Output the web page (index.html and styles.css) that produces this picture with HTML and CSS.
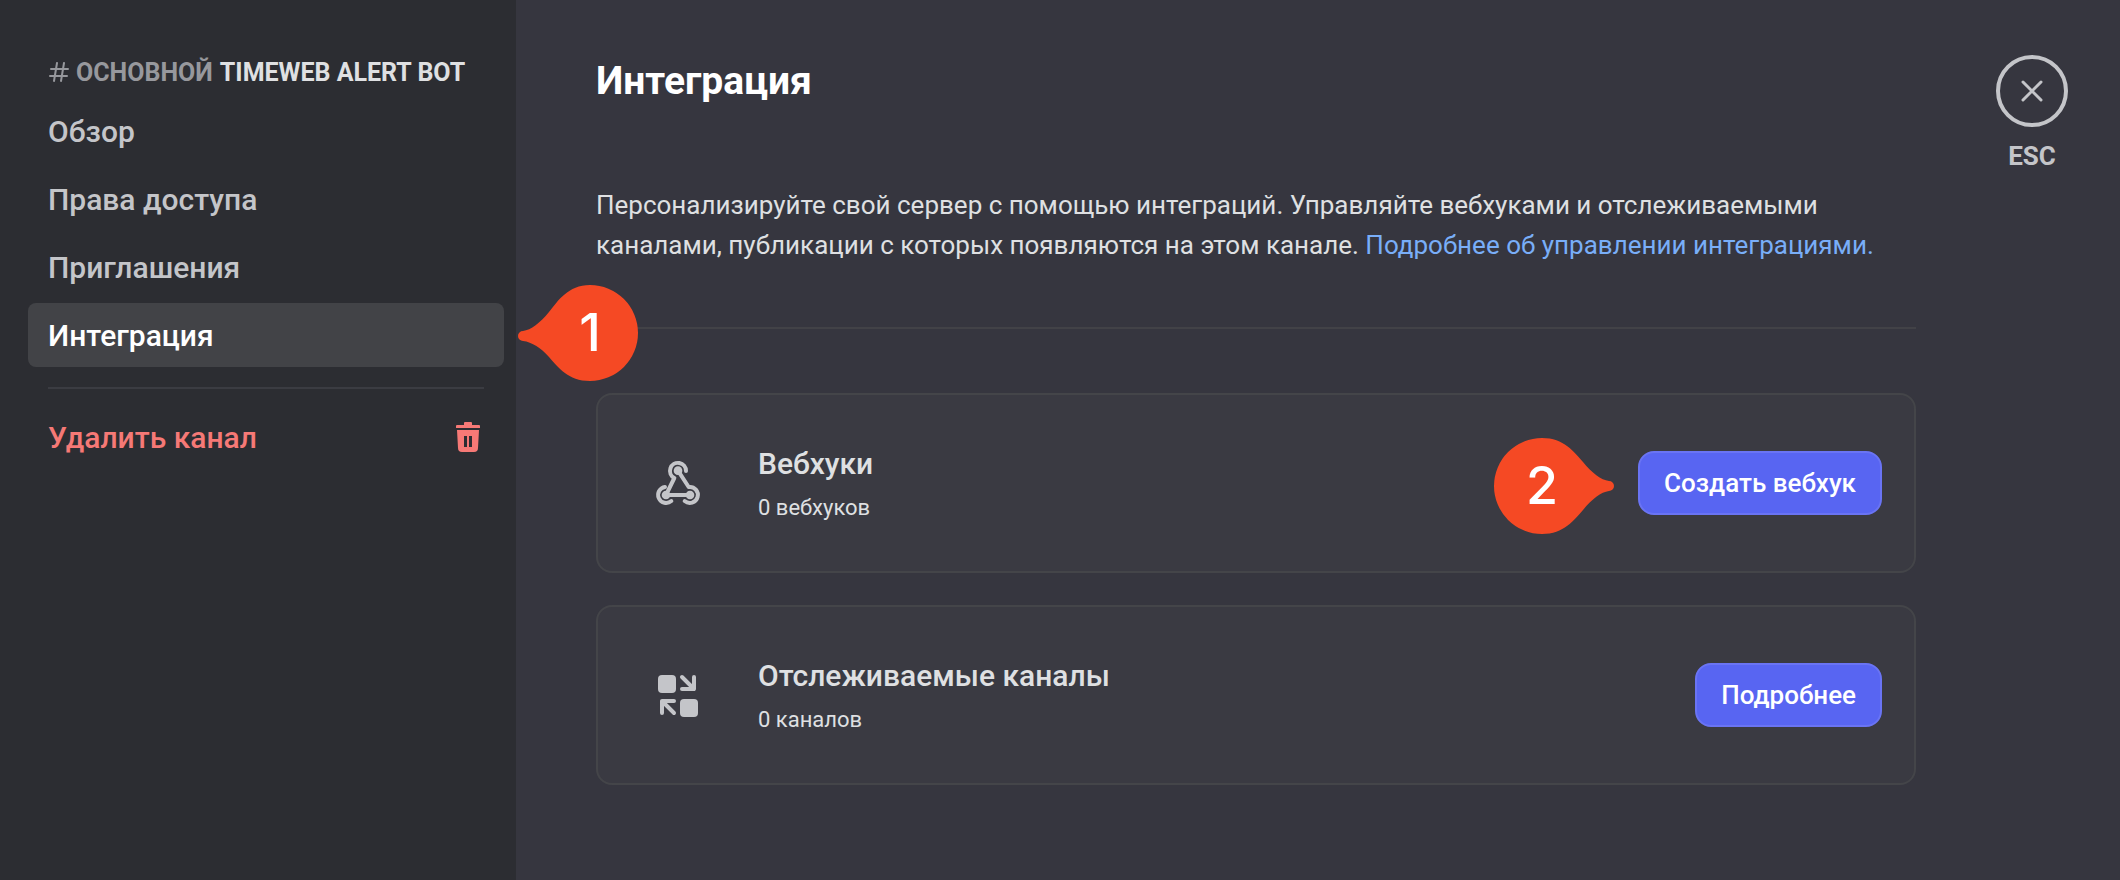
FILE: index.html
```html
<!DOCTYPE html>
<html lang="ru">
<head>
    <meta charset="UTF-8">
    <title>Интеграция</title>
    <link rel="stylesheet" href="styles.css">
</head>
<body>
<div class="settings">
    <aside class="sidebar">
        <h2 class="sidebar-title">
            <svg class="hash-icon" viewBox="0 0 20 20"><path d="M8 1 5 19M15 1l-3 18M2 7h17M1 14h17"/></svg>
            <span class="muted">ОСНОВНОЙ</span>
            <span>TIMEWEB ALERT BOT</span>
        </h2>
        <nav class="menu">
            <a class="menu-item" href="#overview">Обзор</a>
            <a class="menu-item" href="#permissions">Права доступа</a>
            <a class="menu-item" href="#invites">Приглашения</a>
            <a class="menu-item active" href="#integrations">Интеграция
                <span class="marker marker-left">
                    <svg viewBox="0 0 120 96"><path d="M72 0C50 0 40 16 31 27 22 38 13 45 5 46A5 5 0 0 0 5 56C14 57 23 63 31 72 40 82 50 96 72 96A48 48 0 0 0 72 0Z"/></svg>
                    <b>1</b>
                </span>
            </a>
        </nav>
        <hr class="sidebar-line">
        <button type="button" class="menu-item delete">
            Удалить канал
            <svg class="trash-icon" viewBox="0 0 24 30">
                <path d="M8 3V1a1 1 0 0 1 1-1h6a1 1 0 0 1 1 1v2h7a1 1 0 0 1 1 1v2H0V4a1 1 0 0 1 1-1z"/>
                <path fill-rule="evenodd" d="M1 8h22l-1 18a4 4 0 0 1-4 4H6a4 4 0 0 1-4-4zM8 14v11h3V14zM13 14v11h3V14z"/>
            </svg>
        </button>
    </aside>
    <main class="main">
        <div class="content">
            <h1>Интеграция</h1>
            <p class="description">Персонализируйте свой сервер с помощью интеграций. Управляйте вебхуками и отслеживаемыми каналами, публикации с которых появляются на этом канале. <a href="#help">Подробнее об управлении интеграциями.</a></p>
            <hr class="content-line">
            <section class="card">
                <svg class="card-icon" viewBox="0 0 144 144">
                    <g fill="none" stroke="currentColor" stroke-width="12" stroke-linecap="round" stroke-linejoin="round">
                        <path d="M96 36A24 24 0 1 0 61 57L36 108"/>
                        <path d="M72 35 104 84A24 24 0 1 1 92 126"/>
                        <path d="M33 84A24 24 0 1 0 52 126"/>
                        <path d="M36 108H108"/>
                    </g>
                    <circle cx="72" cy="35" r="13"/>
                    <circle cx="36" cy="108" r="13"/>
                    <circle cx="108" cy="108" r="13"/>
                </svg>
                <div class="card-text">
                    <h3>Вебхуки</h3>
                    <p>0 вебхуков</p>
                </div>
                <div class="card-action">
                    <span class="marker marker-right">
                        <svg viewBox="0 0 120 96"><path d="M48 0C70 0 80 14 89 24 98 35 107 42 115 43A5 5 0 0 1 115 53C107 54 98 61 89 72 80 82 70 96 48 96A48 48 0 0 1 48 0Z"/></svg>
                        <b>2</b>
                    </span>
                    <button type="button" class="btn">Создать вебхук</button>
                </div>
            </section>
            <section class="card">
                <svg class="card-icon" viewBox="0 0 48 48">
                    <rect x="4" y="4" width="18" height="18" rx="4"/>
                    <rect x="26" y="28" width="18" height="18" rx="4"/>
                    <path class="arrow" d="M28 6 40 18M40 6v12H28M20 42 8 30M20 30H8v12"/>
                </svg>
                <div class="card-text">
                    <h3>Отслеживаемые каналы</h3>
                    <p>0 каналов</p>
                </div>
                <div class="card-action">
                    <button type="button" class="btn">Подробнее</button>
                </div>
            </section>
        </div>
        <div class="close">
            <button type="button" class="close-btn" id="close" aria-label="Закрыть">
                <svg viewBox="0 0 24 24"><path d="M3 3 21 21M21 3 3 21"/></svg>
            </button>
            <label for="close">ESC</label>
        </div>
    </main>
</div>
</body>
</html>
```

FILE: styles.css
```css
* {
    box-sizing: border-box;
}
body {
    margin: 0;
    background-color: #36363f;
    color: #dfe0e2;
    font-family: Roboto, "Noto Sans", sans-serif;
}
h1, h2, h3, p {
    margin: 0;
}
button {
    font-family: inherit;
    cursor: pointer;
}
.settings {
    display: flex;
    min-height: 100vh;
}

/* sidebar */
.sidebar {
    flex: 0 0 516px;
    position: relative;
    z-index: 1;
    padding: 56px 12px 0 28px;
    background-color: #2c2d32;
}
.sidebar-title {
    display: flex;
    align-items: center;
    gap: 7px;
    height: 32px;
    margin-bottom: 11px;
    padding-left: 21px;
    font-size: 25px;
    font-weight: 700;
    white-space: nowrap;
}
.muted {
    color: #97989d;
}
.hash-icon {
    width: 20px;
    height: 20px;
    fill: none;
    stroke: #97989d;
    stroke-width: 2;
    stroke-linecap: round;
}
.menu {
    display: flex;
    flex-direction: column;
    gap: 4px;
}
.menu-item {
    display: flex;
    align-items: center;
    position: relative;
    width: 100%;
    height: 64px;
    padding: 0 20px;
    border: none;
    border-radius: 8px;
    background: none;
    color: #c4c5c9;
    font-size: 30px;
    font-weight: 500;
    text-decoration: none;
}
.active {
    background-color: #424347;
    color: #fff;
}
.sidebar-line {
    height: 2px;
    margin: 20px 20px 16px;
    border: none;
    background-color: #3b3c42;
}
.delete {
    justify-content: space-between;
    padding-right: 24px;
    color: #f67976;
}
.trash-icon {
    width: 24px;
    height: 30px;
    fill: #f67976;
}

/* numbered markers over the page */
.marker {
    position: absolute;
    width: 120px;
    height: 96px;
    color: #fff;
    font-family: Inter, sans-serif;
    font-size: 52px;
    line-height: 96px;
    text-align: center;
}
.marker svg {
    position: absolute;
    inset: 0;
    fill: #f54924;
}
.marker b {
    position: relative;
    font-weight: 500;
}
.marker-left {
    left: calc(100% + 14px);
    top: -18px;
    padding-left: 24px;
}
.marker-right {
    right: calc(100% + 24px);
    top: -13px;
    padding-right: 24px;
}

/* main part */
.main {
    flex: 1;
    display: flex;
    gap: 80px;
    padding: 55px 52px 0 80px;
}
.content {
    flex: 1;
    padding-top: 2px;
}
h1 {
    color: #fff;
    font-size: 39px;
    font-weight: 700;
    line-height: 48px;
}
.description {
    margin-top: 80px;
    font-size: 26px;
    line-height: 40px;
}
.description a {
    color: #79aef8;
    text-decoration: none;
}
.content-line {
    height: 2px;
    margin: 62px 0 64px;
    border: none;
    background-color: #424247;
}
.card {
    display: flex;
    align-items: center;
    height: 180px;
    margin-bottom: 32px;
    padding: 0 32px 0 56px;
    border: 2px solid #444549;
    border-radius: 16px;
    background-color: #3a3a42;
}
.card-icon {
    width: 48px;
    height: 48px;
    fill: #c4c5c9;
    color: #c4c5c9;
}
.arrow {
    fill: none;
    stroke: #c4c5c9;
    stroke-width: 4;
    stroke-linecap: round;
    stroke-linejoin: round;
}
.card-text {
    flex: 1;
    margin-left: 56px;
    padding-top: 2px;
}
.card-text h3 {
    font-size: 30px;
    font-weight: 500;
    line-height: 40px;
}
.card-text p {
    margin-top: 8px;
    font-size: 22px;
    line-height: 32px;
}
.card-action {
    position: relative;
}
.btn {
    height: 64px;
    padding: 0 24px;
    border: 2px solid #6a74f4;
    border-radius: 16px;
    background-color: #5865f2;
    color: #fff;
    font-size: 26px;
    font-weight: 500;
}
.close {
    display: flex;
    flex-direction: column;
    align-items: center;
    gap: 12px;
    width: 72px;
    color: #c4c5c9;
    font-size: 26px;
    font-weight: 700;
    line-height: 34px;
}
.close-btn {
    display: flex;
    align-items: center;
    justify-content: center;
    width: 72px;
    height: 72px;
    border: 4px solid #c4c5c9;
    border-radius: 50%;
    background: none;
}
.close-btn svg {
    width: 24px;
    height: 24px;
    stroke: #c4c5c9;
    stroke-width: 3;
    stroke-linecap: round;
}
```
